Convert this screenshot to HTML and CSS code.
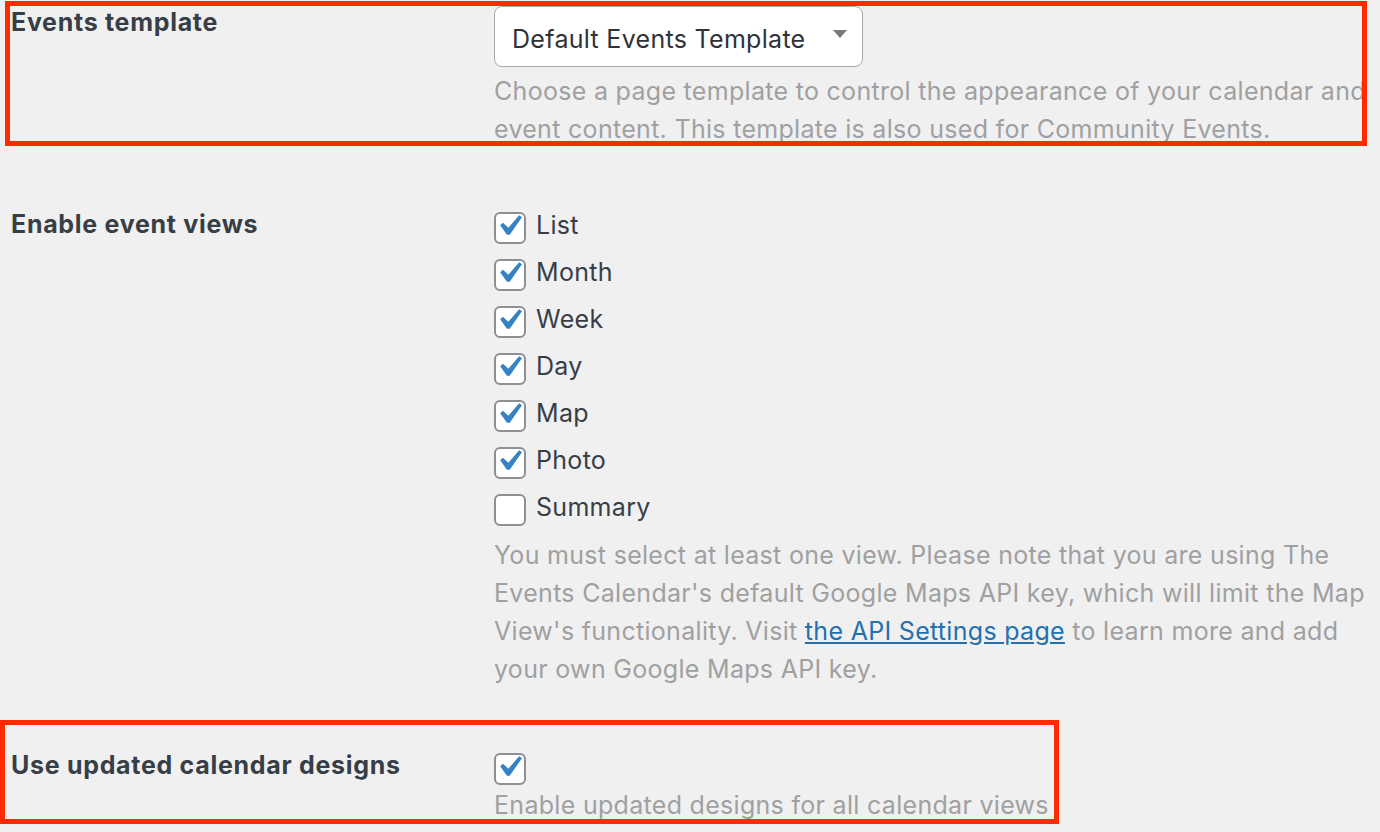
FILE: index.html
```html
<!DOCTYPE html>
<html lang="en">
<head>
    <meta charset="UTF-8">
    <meta name="viewport" content="width=device-width, initial-scale=1.0">
    <title>Display Settings</title>
    <link rel="stylesheet" href="styles.css">
</head>
<body>
    <div class="settings">
        <!-- Events template -->
        <div class="setting-row row-template">
            <div class="setting-label">Events template</div>
            <div class="setting-field">
                <div class="select-box">
                    <span>Default Events Template</span>
                    <svg class="select-arrow" width="14" height="8" viewBox="0 0 14 8"><path d="M0 0h14L7 8z" fill="#7a7a7a"/></svg>
                </div>
                <p class="description">Choose a page template to control the appearance of your calendar and event content. This template is also used for Community Events.</p>
            </div>
        </div>

        <!-- Enable event views -->
        <div class="setting-row row-views">
            <div class="setting-label">Enable event views</div>
            <div class="setting-field">
                <label class="check-row"><span class="checkbox checked"><svg viewBox="0 0 20 20"><path d="M14.83 4.89l1.34.94-5.81 8.38H9.02L5.78 9.67l1.34-1.25 2.57 2.4z"/></svg></span>List</label>
                <label class="check-row"><span class="checkbox checked"><svg viewBox="0 0 20 20"><path d="M14.83 4.89l1.34.94-5.81 8.38H9.02L5.78 9.67l1.34-1.25 2.57 2.4z"/></svg></span>Month</label>
                <label class="check-row"><span class="checkbox checked"><svg viewBox="0 0 20 20"><path d="M14.83 4.89l1.34.94-5.81 8.38H9.02L5.78 9.67l1.34-1.25 2.57 2.4z"/></svg></span>Week</label>
                <label class="check-row"><span class="checkbox checked"><svg viewBox="0 0 20 20"><path d="M14.83 4.89l1.34.94-5.81 8.38H9.02L5.78 9.67l1.34-1.25 2.57 2.4z"/></svg></span>Day</label>
                <label class="check-row"><span class="checkbox checked"><svg viewBox="0 0 20 20"><path d="M14.83 4.89l1.34.94-5.81 8.38H9.02L5.78 9.67l1.34-1.25 2.57 2.4z"/></svg></span>Map</label>
                <label class="check-row"><span class="checkbox checked"><svg viewBox="0 0 20 20"><path d="M14.83 4.89l1.34.94-5.81 8.38H9.02L5.78 9.67l1.34-1.25 2.57 2.4z"/></svg></span>Photo</label>
                <label class="check-row"><span class="checkbox"></span>Summary</label>
                <p class="description views-note">You must select at least one view. Please note that you are using The Events Calendar's default Google Maps API key, which will limit the Map View's functionality. Visit <a href="#">the API Settings page</a> to learn more and add your own Google Maps API key.</p>
            </div>
        </div>

        <!-- Updated designs -->
        <div class="setting-row row-designs">
            <div class="setting-label">Use updated calendar designs</div>
            <div class="setting-field">
                <label class="check-row single"><span class="checkbox checked"><svg viewBox="0 0 20 20"><path d="M14.83 4.89l1.34.94-5.81 8.38H9.02L5.78 9.67l1.34-1.25 2.57 2.4z"/></svg></span></label>
                <p class="description">Enable updated designs for all calendar views</p>
            </div>
        </div>
    </div>

    <!-- highlight frames -->
    <div class="highlight highlight-top"></div>
    <div class="highlight highlight-bottom"></div>
</body>
</html>
```

FILE: styles.css
```css
/* Page */
body {
    margin: 0;
    padding: 0;
    background: #f0f0f1;
    font-family: 'Inter', 'Noto Sans', sans-serif;
    font-size: 25px;
    letter-spacing: 0.3px;
    color: #373e46;
    position: relative;
    height: 832px;
    overflow: hidden;
}

.settings {
    padding-left: 11px;
}

/* Setting rows */
.setting-row {
    display: grid;
    grid-template-columns: 483px 1fr;
}

.setting-label {
    font-weight: 700;
    letter-spacing: 0.7px;
    line-height: 47px;
}

.row-template .setting-label {
    line-height: 44px;
}

.row-views {
    margin-top: 53px;
}

.row-designs {
    margin-top: 54px;
}

.setting-field {
    max-width: 874px;
}

/* Select */
.select-box {
    margin-top: 6px;
    width: 369px;
    height: 61px;
    box-sizing: border-box;
    border: 1.5px solid #a7a9ad;
    border-radius: 8px;
    background: #fff;
    display: flex;
    align-items: center;
    justify-content: space-between;
    padding: 4px 15px 0 17px;
    color: #2f3338;
}

.select-arrow {
    margin-top: -10px;
}

/* Description text */
.description {
    margin: 5px 0 0;
    line-height: 38px;
    color: #a0a0a0;
}

.description a {
    color: #2271b1;
}

.views-note {
    margin-top: 6px;
}

.row-designs .description {
    margin-top: -3px;
}

/* Checkboxes */
.check-row {
    display: flex;
    align-items: center;
    height: 47px;
    gap: 10px;
}

.checkbox {
    width: 32px;
    height: 32px;
    box-sizing: border-box;
    border: 2px solid #8c8f94;
    border-radius: 6px;
    background: #fff;
    margin-top: 6px;
    position: relative;
}

.checkbox svg {
    position: absolute;
    left: -8px;
    top: -9px;
    width: 42px;
    height: 42px;
    fill: #3582c4;
}

/* Highlight frames */
.highlight {
    position: absolute;
    border: 5px solid #ff2a00;
    box-sizing: border-box;
}

.highlight-top {
    left: 5px;
    top: 1px;
    width: 1362px;
    height: 145px;
}

.highlight-bottom {
    left: 0;
    top: 720px;
    width: 1059px;
    height: 104px;
}
```
